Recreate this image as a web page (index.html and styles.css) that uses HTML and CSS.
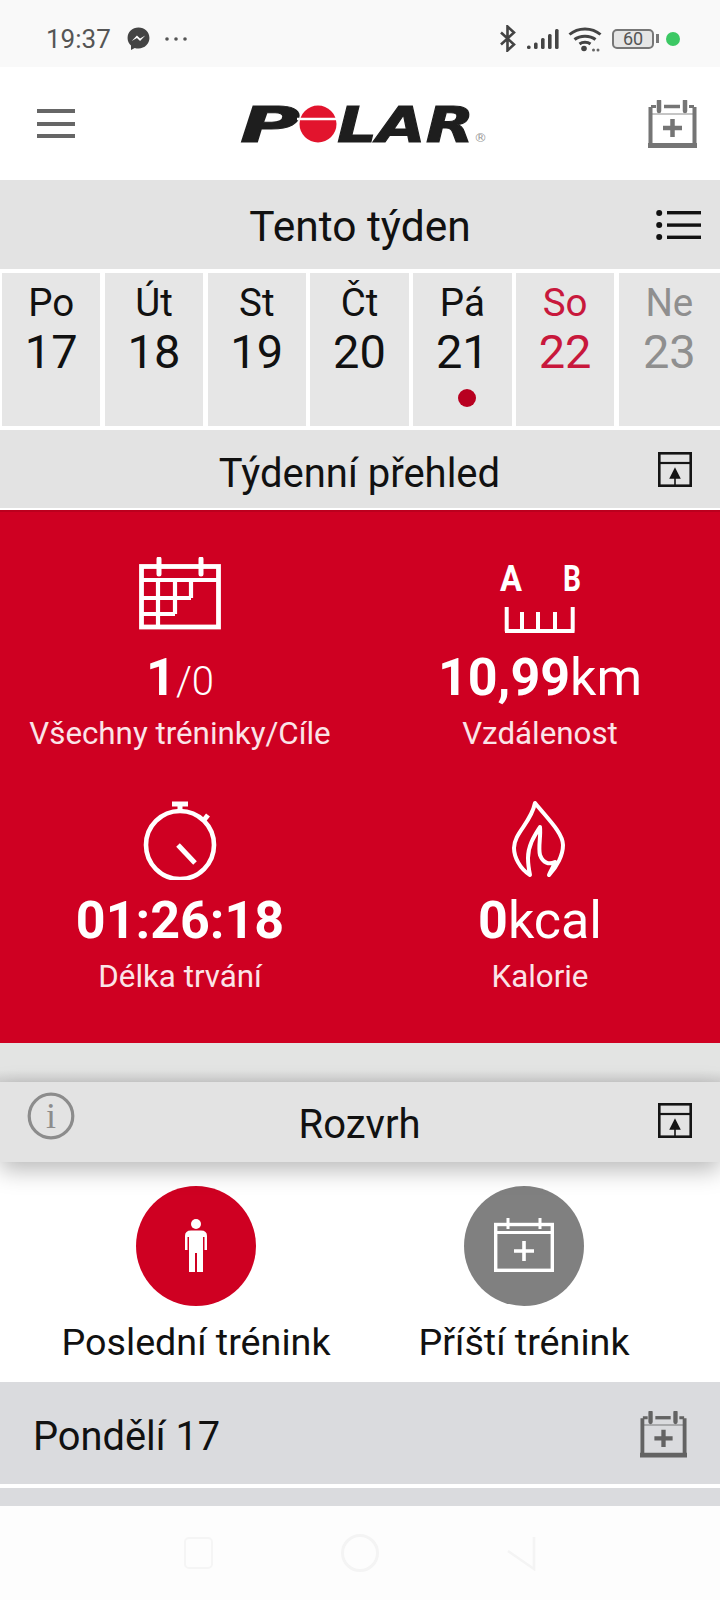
FILE: index.html
```html
<!DOCTYPE html>
<html lang="cs">
<head>
    <meta charset="UTF-8">
    <meta name="viewport" content="width=device-width, initial-scale=1.0">
    <title>Polar Flow - Tento týden</title>
    <link rel="stylesheet" href="styles.css">
</head>
<body>

    <svg class="sprites" width="0" height="0">
        <symbol id="cal-add" viewBox="0 0 49 48">
            <path d="M2.5 7V45.5H46.5V7" fill="none" stroke="currentColor" stroke-width="4"/>
            <path d="M0 45.5H49" stroke="currentColor" stroke-width="5"/>
            <path d="M3 6.5H8M41 6.5H46" stroke="currentColor" stroke-width="3"/>
            <path d="M11 1V11M37 1V11" stroke="currentColor" stroke-width="4.5" stroke-linecap="round"/>
            <path d="M16 6.5H32" stroke="currentColor" stroke-width="3.5"/>
            <path d="M4 14H45" stroke="currentColor" stroke-width="1.5" opacity=".55"/>
            <path d="M24.5 19V37M15 28H34" stroke="currentColor" stroke-width="4.5"/>
        </symbol>
        <symbol id="expand" viewBox="0 0 34 35">
            <rect x="1.3" y="1.3" width="31.4" height="32.4" fill="none" stroke="currentColor" stroke-width="2.6"/>
            <path d="M1 11H33" stroke="currentColor" stroke-width="2.2"/>
            <path d="M17 17L21.5 26H12.5ZM17 24V34" fill="currentColor" stroke="currentColor" stroke-width="1.6"/>
        </symbol>
    </svg>

    <!-- Status bar -->
    <div class="status-bar">
        <div class="status-left">
            <span class="clock">19:37</span>
            <svg class="ic-messenger" viewBox="0 0 24 24">
                <path d="M12 1.5C6 1.5 1.5 6 1.5 11.5c0 3 1.3 5.5 3.3 7.3V23l3.6-2c1.1.3 2.3.5 3.6.5 6 0 10.5-4.5 10.5-10S18 1.5 12 1.5z" fill="#444"/>
                <path d="M5.5 14.5l5-5.5 3 3 5-3-5 5.5-3-3z" fill="#fff"/>
            </svg>
            <svg class="ic-more" viewBox="0 0 22 4">
                <circle cx="2" cy="2" r="1.8"/><circle cx="11" cy="2" r="1.8"/><circle cx="20" cy="2" r="1.8"/>
            </svg>
        </div>
        <div class="status-right">
            <svg class="ic-bt" viewBox="0 0 17 27">
                <path d="M2 7.5L15 19.5L8.5 25.5V1.5L15 7.5L2 19.5" fill="none" stroke="#444" stroke-width="2.6"/>
            </svg>
            <svg class="ic-signal" viewBox="0 0 32 20">
                <rect x="0" y="16.5" width="3.6" height="3.5" rx="1.5"/>
                <rect x="7" y="13.5" width="3.6" height="6.5" rx="1.5"/>
                <rect x="14" y="9" width="3.6" height="11" rx="1.5"/>
                <rect x="21" y="5" width="3.6" height="15" rx="1.5"/>
                <rect x="28" y="0" width="3.6" height="20" rx="1.5"/>
            </svg>
            <svg class="ic-wifi" viewBox="0 0 34 26">
                <path d="M1.5 8.5C10 1 24 1 32.5 8.5M6.5 13.5C12 9 22 9 27.5 13.5M11.5 18C14.5 15.8 19.5 15.8 22.5 18" fill="none" stroke="#444" stroke-width="3"/>
                <circle cx="16" cy="22.5" r="2.8" fill="#444"/>
                <circle cx="25.5" cy="24" r="1.5" fill="#666"/><circle cx="30" cy="24" r="1.5" fill="#666"/>
            </svg>
            <div class="battery">
                <span class="battery-level">60</span>
                <span class="battery-nub"></span>
            </div>
            <span class="status-dot"></span>
        </div>
    </div>

    <!-- Header -->
    <div class="header">
        <div class="burger"><span></span><span></span><span></span></div>
        <svg class="logo" viewBox="-14 -12 268 66">
            <text class="logo-text" x="-7" y="38" textLength="60" lengthAdjust="spacingAndGlyphs">P</text>
            <circle cx="71" cy="20" r="18.5" fill="#e2142d"/>
            <path d="M50 15H92" stroke="#fff" stroke-width="2.6"/>
            <text class="logo-text" x="90" y="38" textLength="137" lengthAdjust="spacingAndGlyphs">LAR</text>
            <text class="logo-mark" x="227" y="38">®</text>
        </svg>
        <svg class="cal-top"><use href="#cal-add"/></svg>
    </div>

    <!-- Tento týden -->
    <div class="bar bar-week">
        <span></span>
        <h1>Tento týden</h1>
        <svg class="ic-list" viewBox="0 0 45 30">
            <circle cx="3.2" cy="3" r="3"/><circle cx="3.2" cy="15" r="3"/><circle cx="3.2" cy="27" r="3"/>
            <rect x="11" y="1" width="34" height="3.4"/><rect x="11" y="13.4" width="34" height="3.4"/><rect x="11" y="25.6" width="34" height="3.4"/>
        </svg>
    </div>

    <div class="days">
        <div class="day"><span class="day-name">Po</span><span class="day-num">17</span></div>
        <div class="day"><span class="day-name">Út</span><span class="day-num">18</span></div>
        <div class="day"><span class="day-name">St</span><span class="day-num">19</span></div>
        <div class="day"><span class="day-name">Čt</span><span class="day-num">20</span></div>
        <div class="day"><span class="day-name">Pá</span><span class="day-num">21</span><span class="day-dot"></span></div>
        <div class="day day-sat"><span class="day-name">So</span><span class="day-num">22</span></div>
        <div class="day day-sun"><span class="day-name">Ne</span><span class="day-num">23</span></div>
    </div>

    <!-- Týdenní přehled -->
    <div class="bar bar-summary">
        <span></span>
        <h2>Týdenní přehled</h2>
        <svg class="ic-expand"><use href="#expand"/></svg>
    </div>

    <div class="stats">
        <div class="stat">
            <svg class="stat-icon" viewBox="0 0 100 80">
                <g fill="none" stroke="#fff" stroke-width="4.2">
                    <rect x="11.5" y="9.5" width="77" height="60.5" stroke-width="4.8"/>
                    <path d="M10 23H90M28 23V70M45 23V57M61 23V41M10 41H61M10 57H45"/>
                    <path d="M29 2V17M71 2V17" stroke-width="5" stroke-linecap="round"/>
                </g>
            </svg>
            <div class="stat-value"><b>1</b><span class="thin">/0</span></div>
            <div class="stat-label">Všechny tréninky/Cíle</div>
        </div>
        <div class="stat">
            <svg class="stat-icon" viewBox="0 0 100 80">
                <text class="ab-text" x="10" y="34" textLength="22" lengthAdjust="spacingAndGlyphs">A</text>
                <text class="ab-text" x="73" y="34" textLength="18" lengthAdjust="spacingAndGlyphs">B</text>
                <path d="M16.7 50V74.5M32 55V74M48 55V74M65 55V74M82.7 50V74.5M15 74H84.5" fill="none" stroke="#fff" stroke-width="4"/>
            </svg>
            <div class="stat-value"><b>10,99</b><span class="unit">km</span></div>
            <div class="stat-label">Vzdálenost</div>
        </div>
        <div class="stat">
            <svg class="stat-icon" viewBox="0 0 100 80">
                <g fill="none" stroke="#fff">
                    <ellipse cx="50" cy="45" rx="34" ry="34" stroke-width="4.6"/>
                    <path d="M50 4V12M42 4H58M74 20L78 15" stroke-width="5"/>
                    <path d="M48 45L65 63" stroke-width="5"/>
                </g>
            </svg>
            <div class="stat-value"><b>01:26:18</b></div>
            <div class="stat-label">Délka trvání</div>
        </div>
        <div class="stat">
            <svg class="stat-icon" viewBox="-10 5 100 80">
                <path d="M35 8C48 24 63 38 63 50C63 60 57 72 49 80C51 75 54 71 55 67C49 70 43 68 40 60C38 52 41 42 40 32C35 40 28 50 28 63C28 70 29 75 30 80C20 74 14 62 14 53C14 38 31 28 35 8Z" fill="none" stroke="#fff" stroke-width="4" stroke-linejoin="round"/>
            </svg>
            <div class="stat-value"><b>0</b><span class="unit">kcal</span></div>
            <div class="stat-label">Kalorie</div>
        </div>
    </div>

    <div class="spacer"></div>

    <!-- Rozvrh -->
    <div class="bar bar-schedule">
        <svg class="ic-info" viewBox="0 0 48 48">
            <circle cx="24" cy="24" r="21.8" fill="none" stroke="#8c8c8c" stroke-width="3.2"/>
            <text class="info-i" x="24" y="36" text-anchor="middle">i</text>
        </svg>
        <h2>Rozvrh</h2>
        <svg class="ic-expand"><use href="#expand"/></svg>
    </div>

    <div class="shortcuts">
        <div class="shortcut">
            <div class="shortcut-circle red">
                <svg class="ic-person" viewBox="0 0 24 54">
                    <circle cx="12" cy="5" r="5" fill="#fff"/>
                    <path d="M7 11.5H17Q23 11.5 23 17V31H20.5V18H19V53H13V34H11V53H5V18H3.5V31H1V17Q1 11.5 7 11.5Z" fill="#fff"/>
                </svg>
            </div>
            <div class="shortcut-label">Poslední trénink</div>
        </div>
        <div class="shortcut">
            <div class="shortcut-circle grey">
                <svg class="ic-next" viewBox="0 0 60 55">
                    <rect x="1.7" y="7.5" width="56.6" height="45.8" fill="none" stroke="#fff" stroke-width="3.4"/>
                    <path d="M1 15.5H59" stroke="#fff" stroke-width="2.8"/>
                    <path d="M14 1V12M46 1V12" stroke="#fff" stroke-width="3"/>
                    <path d="M30 24V44M20 34H40" stroke="#fff" stroke-width="3.6"/>
                </svg>
            </div>
            <div class="shortcut-label">Příští trénink</div>
        </div>
    </div>

    <!-- Pondělí -->
    <div class="day-row">
        <span class="day-row-title">Pondělí 17</span>
        <svg class="cal-row"><use href="#cal-add"/></svg>
    </div>
    <div class="day-strip"></div>

    <!-- Navigation bar -->
    <div class="nav-bar">
        <span class="nav-square"></span>
        <span class="nav-circle"></span>
        <svg class="nav-back" viewBox="0 0 30 36">
            <path d="M28 2V34L2 16" fill="none" stroke="#f4f4f4" stroke-width="2.5"/>
        </svg>
    </div>

</body>
</html>
```

FILE: styles.css
```css
/* General */
* {
    margin: 0;
    padding: 0;
    box-sizing: border-box;
}

body {
    width: 720px;
    height: 1600px;
    overflow: hidden;
    background-color: #fff;
    font-family: Roboto, "Liberation Sans", sans-serif;
    color: #111;
}

.sprites {
    position: absolute;
}

svg {
    display: block;
}

/* Status bar */
.status-bar {
    height: 67px;
    background-color: #f9f9f9;
    padding: 10px 40px 0 46px;
    display: flex;
    justify-content: space-between;
    align-items: center;
}

.status-left,
.status-right {
    display: flex;
    align-items: center;
}

.clock {
    font-size: 26px;
    color: #555;
}

.ic-messenger {
    width: 25px;
    height: 25px;
    margin-left: 15px;
}

.ic-more {
    width: 22px;
    height: 4px;
    margin-left: 14px;
    fill: #555;
}

.ic-bt {
    width: 17px;
    height: 27px;
}

.ic-signal {
    width: 32px;
    height: 20px;
    margin-left: 11px;
    fill: #444;
}

.ic-wifi {
    width: 34px;
    height: 26px;
    margin-left: 9px;
}

.battery {
    width: 42px;
    height: 20px;
    margin-left: 10px;
    margin-right: 4px;
    border: 2.5px solid #777;
    border-radius: 5px;
    background-color: #e6e6e6;
    display: flex;
    align-items: center;
    justify-content: center;
    position: relative;
}

.battery-level {
    font-size: 18px;
    line-height: 1;
    color: #555;
}

.battery-nub {
    position: absolute;
    right: -7px;
    top: 3px;
    width: 3px;
    height: 9px;
    background-color: #777;
}

.status-dot {
    width: 14px;
    height: 14px;
    margin-left: 8px;
    border-radius: 50%;
    background-color: #3cc864;
}

/* Header */
.header {
    height: 113px;
    padding: 0 23px 0 37px;
    display: grid;
    grid-template-columns: 1fr auto 1fr;
    align-items: center;
}

.burger {
    width: 38px;
    display: flex;
    flex-direction: column;
    gap: 8.5px;
    margin-top: 0;
}

.burger span {
    height: 4px;
    background-color: #666;
}

.logo {
    width: 268px;
    height: 66px;
    margin-top: 3px;
}

.logo-text {
    font-family: "DejaVu Sans", sans-serif;
    font-size: 50px;
    font-weight: 700;
    font-style: italic;
    fill: #1e1e1e;
    stroke: #1e1e1e;
    stroke-width: 1;
}

.logo-mark {
    font-family: "DejaVu Sans", sans-serif;
    font-size: 13px;
    fill: #999;
}

.cal-top {
    width: 49px;
    height: 48px;
    justify-self: end;
    margin-top: 0;
    color: #757575;
}

/* Grey title bars */
.bar {
    background-color: #e3e3e3;
    display: grid;
    grid-template-columns: 1fr auto 1fr;
    align-items: center;
    padding: 0 28px 0 27px;
}

.bar > svg:last-child {
    justify-self: end;
}

.bar h1,
.bar h2 {
    font-weight: 400;
}

.bar-week {
    height: 89px;
    padding: 0 19px;
}

.bar-week h1 {
    font-size: 42.5px;
    margin-top: 4px;
}

.ic-list {
    width: 45px;
    height: 30px;
    fill: #111;
}

.bar-summary {
    height: 78px;
    margin-bottom: 2px;
}

.bar-summary h2,
.bar-schedule h2 {
    font-size: 40px;
}

.bar-summary h2 {
    margin-top: 8px;
}

.bar-schedule h2 {
    margin-top: 4px;
}

.ic-expand {
    width: 34px;
    height: 35px;
    color: #151515;
}

/* Days of the week */
.days {
    display: grid;
    grid-template-columns: repeat(6, 98.4px) 1fr;
    gap: 4.4px;
    padding: 4px 0 4px 2px;
}

.day {
    height: 153px;
    background-color: #e6e6e6;
    padding-top: 8px;
    display: flex;
    flex-direction: column;
    align-items: center;
}

.day-name {
    font-size: 38.5px;
    line-height: 44px;
    height: 44px;
}

.day-num {
    font-size: 47px;
    line-height: 54px;
}

.day-dot {
    width: 18px;
    height: 18px;
    margin-top: 10px;
    margin-left: 9px;
    border-radius: 50%;
    background-color: #b80020;
}

.day-sat {
    color: #c8183c;
}

.day-sun {
    color: #8f8f8f;
}

/* Red summary panel */
.stats {
    height: 533px;
    padding-top: 47px;
    background-color: #cf0022;
    border-top: 2px solid #bb001e;
    display: grid;
    grid-template-columns: 1fr 1fr;
    grid-auto-rows: 243px;
    color: #fff;
}

.stat {
    display: flex;
    flex-direction: column;
    align-items: center;
    margin-top: -2px;
}

.stat-icon {
    width: 100px;
    height: 80px;
}

.ab-text {
    font-size: 36px;
    font-weight: 700;
    fill: #fff;
}

.stat-value {
    height: 60px;
    margin-top: 11px;
    font-size: 52px;
    line-height: 60px;
}

.stat-value b {
    font-weight: 700;
}

.thin {
    font-size: 40px;
    font-weight: 300;
}

.unit {
    font-weight: 400;
}

.stat-label {
    margin-top: 6px;
    font-size: 31.3px;
    line-height: 40px;
    color: #fbe4e8;
}

/* Rozvrh */
.spacer {
    height: 39px;
    background: linear-gradient(#e3e4e3 70%, #d2d2d2);
}

.bar-schedule {
    height: 80px;
    box-shadow: 0 8px 22px rgba(0, 0, 0, 0.28);
    position: relative;
}

.ic-info {
    width: 48px;
    height: 48px;
    margin-top: -12px;
}

.info-i {
    font-family: "Liberation Serif", serif;
    font-size: 36px;
    fill: #8c8c8c;
}

.bar-schedule .ic-expand {
    margin-top: -3px;
}

.shortcuts {
    height: 220px;
    padding: 24px 0 0 32px;
    display: grid;
    grid-template-columns: 328px 328px;
}

.shortcut {
    display: flex;
    flex-direction: column;
    align-items: center;
}

.shortcut-circle {
    width: 120px;
    height: 120px;
    border-radius: 50%;
    display: flex;
    align-items: center;
    justify-content: center;
}

.shortcut-circle.red {
    background-color: #cf0022;
}

.shortcut-circle.grey {
    background-color: #808080;
}

.ic-person {
    width: 24px;
    height: 54px;
}

.ic-next {
    width: 60px;
    height: 55px;
    margin-top: -4px;
}

.shortcut-label {
    margin-top: 13px;
    font-size: 37.7px;
    line-height: 46px;
}

/* Pondělí */
.day-row {
    height: 102px;
    background-color: #dadbde;
    padding: 6px 33px 0 33px;
    display: flex;
    justify-content: space-between;
    align-items: center;
}

.day-row-title {
    font-size: 39.8px;
}

.cal-row {
    width: 47px;
    height: 47px;
    margin-top: -4px;
    color: #636363;
}

.day-strip {
    height: 18px;
    margin-top: 4px;
    background-color: #dadbde;
}

/* Navigation bar */
.nav-bar {
    height: 94px;
    background-color: #fdfdfd;
    padding: 0 184px;
    display: flex;
    justify-content: space-between;
    align-items: center;
}

.nav-square {
    width: 29px;
    height: 32px;
    border: 2px solid #f5f5f5;
    border-radius: 5px;
}

.nav-circle {
    width: 38px;
    height: 38px;
    border: 3px solid #f4f4f4;
    border-radius: 50%;
}

.nav-back {
    width: 30px;
    height: 36px;
}
```
